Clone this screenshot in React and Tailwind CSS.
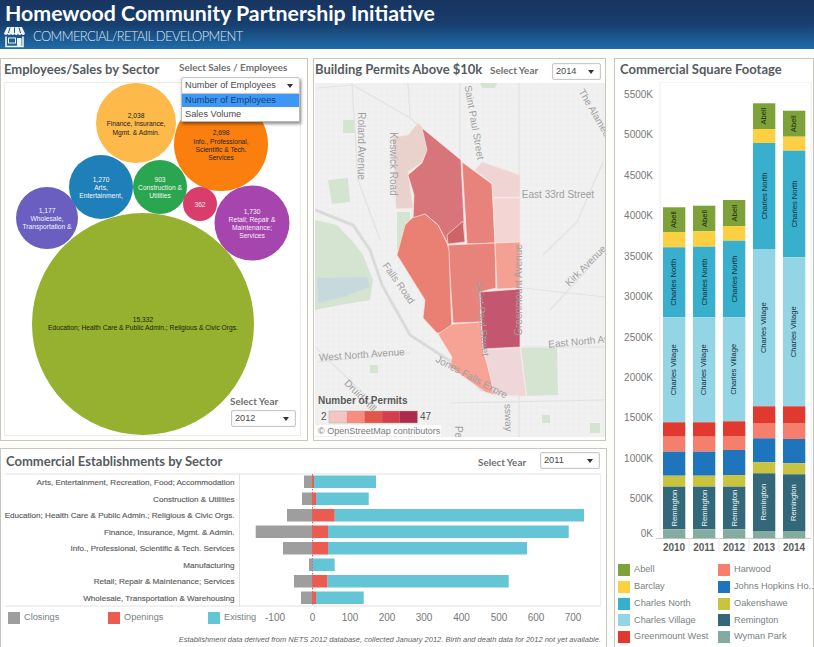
import React from "react";

const bubbles = [
  { cx: 136, cy: 123, r: 40, fill: "#fdb94a", color: "#222", lines: [["2,038", 115], ["Finance, Insurance,", 123], ["Mgmt. & Admin.", 132]] },
  { cx: 221, cy: 144, r: 47, fill: "#fb7f0f", color: "#222", lines: [["2,698", 132], ["Info., Professional,", 141], ["Scientific & Tech.", 149], ["Services", 157]] },
  { cx: 101, cy: 187, r: 32, fill: "#1f7fb8", color: "#f2f7fa", lines: [["1,270", 179], ["Arts,", 187], ["Entertainment,", 195]] },
  { cx: 160, cy: 187, r: 27, fill: "#2ba650", color: "#f2f7f2", lines: [["903", 179], ["Construction &", 187], ["Utilities", 195]] },
  { cx: 200, cy: 204, r: 17, fill: "#d83d6c", color: "#f7e6ec", lines: [["362", 204]] },
  { cx: 47, cy: 218, r: 31, fill: "#6a5fc0", color: "#f5f3fb", lines: [["1,177", 210], ["Wholesale,", 218], ["Transportation &", 226]] },
  { cx: 252, cy: 223, r: 37.5, fill: "#a745ae", color: "#f8eef8", lines: [["1,730", 211], ["Retail; Repair &", 219], ["Maintenance;", 227], ["Services", 235]] },
  { cx: 143, cy: 324, r: 111, fill: "#96b030", color: "#1c2208", lines: [["15,332", 319], ["Education; Health Care & Public Admin.; Religious & Civic Orgs.", 327]] },
];

const districts = [
  { fill: "#e9d2cc", points: "393,137 408,135 418,123 423,128 427,150 422,162 408,172 413,208 396,209" },
  { fill: "#d8757b", points: "422,128 461,160 465,242 448,244 438,225 425,214 413,220 414,195 408,175 422,163 427,150" },
  { fill: "#cc6468", points: "463,221 465,242 448,244 447,235" },
  { fill: "#e8837b", points: "462,162 492,184 495,243 467,244" },
  { fill: "#e8837b", points: "448,245 495,243 496,288 480,292 481,322 453,323" },
  { fill: "#ea7f74", points: "412,218 425,214 438,225 447,243 449,250 452,333 437,333 423,318 425,300 397,255 405,225" },
  { fill: "#f0d3d3", points: "475,170 482,162 520,175 520,197 493,197 492,183" },
  { fill: "#f3d5d4", points: "493,198 520,198 520,242 495,243" },
  { fill: "#f4a194", points: "495,243 520,242 520,288 497,289" },
  { fill: "#c5566f", points: "480,292 520,289 520,347 483,349" },
  { fill: "#f6a294", points: "453,324 481,322 483,349 487,363 492,383 492,394 485,392 450,367 452,357 438,334" },
  { fill: "#efd6d8", points: "483,350 520,348 526,396 493,395 492,383 487,363" },
];

const parks = [
  "521,348 557,348 558,395 527,396",
  "315,220 337,225 353,242 363,255 373,280 370,300 340,305 315,310",
  "343,120 355,120 355,133 343,133",
  "328,180 348,178 350,202 332,204",
  "397,212 410,212 410,250 397,250",
  "480,83 497,83 495,88 482,88",
  "370,365 378,365 378,373 370,373",
  "542,415 550,415 550,423 542,423",
  "590,423 600,423 600,433 590,433",
];

const mainRoads = [
  "317,88 353,85 410,118 420,127",
  "408,83 410,118",
  "519,83 519,437",
  "460,83 460,160",
  "603,162 577,222 543,255",
  "317,362 410,353",
  "523,288 605,297",
  "521,347 605,347",
  "450,403 605,400",
  "315,347 367,397",
  "605,250 550,310",
  "352,83 358,180 380,240",
];

const mapLabels = [
  { text: "Roland Avenue", x: 358, y: 146, a: 90 },
  { text: "Keswick Road", x: 390, y: 164, a: 90 },
  { text: "Saint Paul Street", x: 471, y: 123, a: 80 },
  { text: "The Alameda", x: 593, y: 117, a: 60 },
  { text: "East 33rd Street", x: 558, y: 198, a: 0 },
  { text: "Falls Road", x: 396, y: 285, a: 55 },
  { text: "West North Avenue", x: 362, y: 358, a: -4 },
  { text: "East North Avenue", x: 590, y: 344, a: -5 },
  { text: "Jones Falls Expre", x: 470, y: 380, a: 28 },
  { text: "ssway", x: 505, y: 418, a: 88 },
  { text: "Druid Hill", x: 358, y: 398, a: 45 },
  { text: "Greenmount Avenue", x: 522, y: 290, a: -90 },
  { text: "Saint Paul Street", x: 479, y: 319, a: 85 },
  { text: "Kirk Avenue", x: 588, y: 268, a: -45 },
  { text: "Pe", x: 455, y: 432, a: 90 },
];

const sectors = [
  { label: "Arts, Entertainment, Recreation, Food; Accommodation", y: 475.5, grey: 304, red: 314, teal: 376 },
  { label: "Construction & Utilities", y: 492.5, grey: 302, red: 316, teal: 368.7 },
  { label: "Education; Health Care & Public Admin.; Religious & Civic Orgs.", y: 509, grey: 287, red: 334.7, teal: 584 },
  { label: "Finance, Insurance, Mgmt. & Admin.", y: 525.5, grey: 255.7, red: 328, teal: 568.7 },
  { label: "Info., Professional, Scientific & Tech. Services", y: 542, grey: 283, red: 328, teal: 527 },
  { label: "Manufacturing", y: 558.5, grey: 309, red: 312, teal: 334.7 },
  { label: "Retail; Repair & Maintenance; Services", y: 575, grey: 294, red: 327.3, teal: 508.7 },
  { label: "Wholesale, Transportation & Warehousing", y: 591.5, grey: 301, red: 316, teal: 363.7 },
];

const axisD = [
  { t: "-100", x: 275 },
  { t: "0", x: 312.5 },
  { t: "100", x: 350 },
  { t: "200", x: 387 },
  { t: "300", x: 424 },
  { t: "400", x: 461.5 },
  { t: "500", x: 499 },
  { t: "600", x: 536 },
  { t: "700", x: 573 },
];

const neighborhoods = [
  { name: "Abell", color: "#7da23a" },
  { name: "Barclay", color: "#fdd043" },
  { name: "Charles North", color: "#37afcd" },
  { name: "Charles Village", color: "#93d5e4" },
  { name: "Greenmount West", color: "#e03a30" },
  { name: "Harwood", color: "#f67e6d" },
  { name: "Johns Hopkins Ho...", color: "#1f75bb" },
  { name: "Oakenshawe", color: "#c9c43f" },
  { name: "Remington", color: "#33687a" },
  { name: "Wyman Park", color: "#83ab9f" },
];

// y edges of each stack, top to bottom, same order as neighborhoods
const stacks = [
  { year: "2010", x: 663, edges: [207.3, 232, 247.3, 317.3, 422.3, 436.7, 451.7, 475.7, 486.7, 529.3, 538.3] },
  { year: "2011", x: 693, edges: [205.7, 231.3, 246.7, 317.3, 422.3, 436.7, 451.7, 475.7, 486.7, 529.3, 538.3] },
  { year: "2012", x: 723, edges: [200, 226, 240.7, 317.3, 421.3, 436, 450, 475, 486.7, 529.3, 538.3] },
  { year: "2013", x: 753, edges: [103.3, 129, 143, 249, 406.3, 423, 438.3, 462.3, 473.3, 531, 538.3] },
  { year: "2014", x: 783, edges: [110.7, 136.7, 150.7, 257.3, 406.3, 423, 439, 463.3, 474.3, 531, 538.3] },
];

const stackLabels = { 0: "#1d2a0a", 2: "#12303c", 3: "#14303a", 8: "#eef4f5" };

const axisC = [
  ["5500K", 94], ["5000K", 134], ["4500K", 175], ["4000K", 215], ["3500K", 256], ["3000K", 296],
  ["2500K", 337], ["2000K", 377], ["1500K", 417], ["1000K", 458], ["500K", 498], ["0K", 533],
];

function Dropdown({ value, className }) {
  return (
    <div className={"flex items-center justify-between bg-white border border-[#c9c9c9] rounded-[2px] shadow-[inset_0_0_2px_#ddd] pl-[3px] pr-[6px] h-[17px] text-[9.200px] text-[#4a4a4a] whitespace-nowrap font-['Liberation_Sans',sans-serif] " + className}>
      <span>{value}</span>
      <span className="w-0 h-0 border-x-[3px] border-x-transparent border-t-[4px] border-t-[#333]"></span>
    </div>
  );
}

function SmallLabel({ children, className = "" }) {
  return <div className={"text-[9.900px] font-bold text-[#6f6f6f] font-['Lato',sans-serif] whitespace-nowrap " + className}>{children}</div>;
}

function Title({ children, className = "" }) {
  return <div className={"text-[13px] font-bold text-[#555b5f] font-['Lato',sans-serif] whitespace-nowrap " + className}>{children}</div>;
}

function StoreIcon() {
  return (
    <svg width="23" height="22" viewBox="0 0 23 22" className="shrink-0">
      <path d="M4 1h15l3 6.5a2 2 0 0 1-3.6.6 2.2 2.2 0 0 1-3.5 0 2.2 2.2 0 0 1-3.4 0 2.2 2.2 0 0 1-3.5 0 2.2 2.2 0 0 1-3.5 0 2 2 0 0 1-3.5-.6z" fill="#eef3f7" />
      <path d="M7 1.500 5.500 7M11.500 1.500V7M16 1.500 17.500 7" stroke="#27558a" strokeWidth="1" />
      <path d="M3 10.500V20.500H20V10.500" fill="none" stroke="#eef3f7" strokeWidth="1.600" />
      <rect x="5.500" y="12" width="7" height="5" fill="none" stroke="#eef3f7" strokeWidth="1" />
      <rect x="14" y="12" width="4.500" height="8.500" fill="#eef3f7" />
    </svg>
  );
}

function BubbleChart() {
  return (
    <svg width="295" height="352" viewBox="5 83 295 352" className="block">
      {bubbles.map((b) => (
        <g key={b.cx}>
          <circle cx={b.cx} cy={b.cy} r={b.r} fill={b.fill} />
          {b.lines.map(([t, y]) => (
            <text key={t} x={b.cx} y={y + 2.500} textAnchor="middle" fontSize="6.700" fill={b.color} fontFamily="Liberation Sans, sans-serif">{t}</text>
          ))}
        </g>
      ))}
    </svg>
  );
}

function MapChart() {
  const hLines = [];
  const vLines = [];
  for (let y = 86; y < 437; y += 6) hLines.push(y);
  for (let x = 318; x < 605; x += 6) vLines.push(x);
  return (
    <svg width="290" height="354" viewBox="315 83 290 354" className="block">
      <rect x="315" y="83" width="290" height="354" fill="#efefef" />
      {hLines.map((y) => <line key={y} x1="315" x2="605" y1={y} y2={y} stroke="#f4f4f4" strokeWidth="0.600" />)}
      {vLines.map((x) => <line key={x} y1="83" y2="437" x1={x} x2={x} stroke="#f4f4f4" strokeWidth="0.600" />)}
      {parks.map((p) => <polygon key={p} points={p} fill="#d5e4d0" />)}
      <polygon points="317,278 367,277 370,287 343,297 318,303" fill="#c8d9dd" />
      {mainRoads.map((r) => <polyline key={r} points={r} fill="none" stroke="#e2e2e2" strokeWidth="1.200" />)}
      <polyline points="315,210 353,225 370,250 382,285 410,335 450,361 483,391" fill="none" stroke="#d9dbdb" strokeWidth="3" />
      {districts.map((d) => <polygon key={d.points} points={d.points} fill={d.fill} stroke="#f8e4e0" strokeWidth="0.700" />)}
      {mapLabels.map((l) => (
        <text key={l.text + l.x} x={l.x} y={l.y} textAnchor="middle" fontSize="10" fill="#a0a0a0" fontFamily="Liberation Sans, sans-serif" transform={`rotate(${l.a} ${l.x} ${l.y})`}>{l.text}</text>
      ))}
      <text x="318" y="404" fontSize="10" fontWeight="bold" fill="#5b5b5b" fontFamily="Liberation Sans, sans-serif">Number of Permits</text>
      <text x="321" y="420" fontSize="10" fill="#555" fontFamily="Liberation Sans, sans-serif">2</text>
      {["#f2c6c3", "#f88c80", "#e2554a", "#d23f4b", "#ac2a4e"].map((c, i) => (
        <rect key={c} x={329 + i * 17.700} y="411" width="17.700" height="12" fill={c} />
      ))}
      <rect x="329" y="411" width="88.500" height="12" fill="none" stroke="#aaa" strokeWidth="0.500" />
      <text x="420" y="420" fontSize="10" fill="#555" fontFamily="Liberation Sans, sans-serif">47</text>
      <rect x="315" y="425" width="126" height="11" fill="#fff" fillOpacity="0.850" />
      <text x="318" y="434" fontSize="9" fill="#7b7b7b" fontFamily="Liberation Sans, sans-serif">© OpenStreetMap contributors</text>
    </svg>
  );
}

function StackChart() {
  return (
    <svg width="198" height="478" viewBox="615 82 198 478" className="block">
      <rect x="660" y="82" width="151" height="456" fill="#fff" stroke="#eeeeee" />
      {axisC.map(([t, y]) => (
        <text key={t} x="653" y={y + 3.500} textAnchor="end" fontSize="10" fill="#777" fontFamily="Liberation Sans, sans-serif">{t}</text>
      ))}
      <line x1="656" x2="811" y1="538.500" y2="538.500" stroke="#cfcfcf" />
      {[689, 719, 749, 779].map((x) => <line key={x} x1={x} x2={x} y1="538" y2="552" stroke="#e8e8e8" />)}
      {stacks.map((s) => (
        <g key={s.year}>
          {neighborhoods.map((n, i) => {
            const top = s.edges[i];
            const h = s.edges[i + 1] - top;
            const label = { 0: "Abell", 2: "Charles North", 3: "Charles Village", 8: "Remington" }[i];
            const cx = s.x + 11.500;
            const cy = top + h / 2;
            return (
              <g key={n.name}>
                <rect x={s.x} y={top} width="22.300" height={h} fill={n.color} />
                {label && (
                  <text x={cx} y={cy} textAnchor="middle" dominantBaseline="middle" fontSize="7.600" fill={stackLabels[i]} fontFamily="Liberation Sans, sans-serif" transform={`rotate(-90 ${cx} ${cy})`}>{label}</text>
                )}
              </g>
            );
          })}
          <text x={s.x + 11} y="550.500" textAnchor="middle" fontSize="10" fontWeight="bold" fill="#5b5f60" fontFamily="Liberation Sans, sans-serif">{s.year}</text>
        </g>
      ))}
    </svg>
  );
}

function SectorChart() {
  return (
    <svg width="605" height="137" viewBox="1 473 605 137" className="block">
      <line x1="5" x2="601" y1="474" y2="474" stroke="#e2e2e2" />
      <line x1="5" x2="601" y1="606" y2="606" stroke="#e2e2e2" />
      <line x1="239.500" x2="239.500" y1="474" y2="606" stroke="#e2e2e2" />
      <line x1="600.500" x2="600.500" y1="474" y2="606" stroke="#eeeeee" />
      {sectors.map((s) => (
        <g key={s.label}>
          <text x="234.500" y={s.y + 9} textAnchor="end" fontSize="8.100" fill="#5c5c5c" stroke="#5c5c5c" strokeWidth="0.150" fontFamily="Liberation Sans, sans-serif">{s.label}</text>
          <rect x={s.grey} y={s.y} width={313 - s.grey} height="12.500" fill="#9e9e9e" />
          <rect x={s.red} y={s.y} width={s.teal - s.red} height="12.500" fill="#63c5d6" />
          <rect x="312" y={s.y} width={s.red - 312} height="12.500" fill="#ec5b52" />
        </g>
      ))}
      <line x1="312.500" x2="312.500" y1="474" y2="606" stroke="#e4645c" strokeDasharray="1.500 1.500" />
    </svg>
  );
}

export default function App() {
  const legendD = [
    { name: "Closings", color: "bg-[#9e9e9e]", width: "w-[100px]" },
    { name: "Openings", color: "bg-[#ec5b52]", width: "w-[100px]" },
    { name: "Existing", color: "bg-[#63c5d6]", width: "w-[52px]" },
  ];

  return (
    <div className="w-[814px] h-[647px] overflow-hidden bg-[#fdfdfa] font-['Liberation_Sans',sans-serif]">
      <header className="h-[49px] pl-[5px] bg-gradient-to-b from-[#18345f] via-[#173f70] to-[#1e6ca9] text-white">
        <div className="text-[21.300px] leading-[26px] font-bold font-['Lato',sans-serif] whitespace-nowrap">Homewood Community Partnership Initiative</div>
        <div className="flex items-center -ml-[2px] h-[22px]">
          <StoreIcon />
          <div className="ml-[7px] text-[13px] font-light tracking-[-0.650px] text-[#dbe6f0] font-['Lato',sans-serif] whitespace-nowrap">COMMERCIAL/RETAIL DEVELOPMENT</div>
        </div>
      </header>

      <div className="flex pt-[9px]">
        <div className="w-[607px] shrink-0">
          <div className="flex h-[383px]">
            {/* bubbles */}
            <section className="relative w-[308px] border border-[#cdc4bb] bg-white">
              <div className="h-[23px] pl-[3px] pt-[1px]">
                <Title>Employees/Sales by Sector</Title>
              </div>
              <div className="ml-[3px] w-[297px] h-[354px] border border-[#ecebe6]">
                <BubbleChart />
              </div>
              <SmallLabel className="absolute left-[178px] top-[1px]">Select Sales / Employees</SmallLabel>
              <div className="absolute left-[180px] top-[18px] w-[119px] shadow-[1px_2px_3px_rgba(0,0,0,0.45)]">
                <Dropdown value="Number of Employees" className="rounded-b-none" />
                <div className="bg-white border border-t-0 border-[#b9b9b9] text-[9.200px] text-[#4a4a4a]">
                  <div className="h-[13px] leading-[13px] pl-[3px] bg-[#3f97f5] text-[#173f78]">Number of Employees</div>
                  <div className="h-[14px] leading-[14px] pl-[3px]">Sales Volume</div>
                </div>
              </div>
              <SmallLabel className="absolute left-[229px] top-[335px]">Select Year</SmallLabel>
              <Dropdown value="2012" className="absolute left-[230px] top-[351px] w-[65px]" />
            </section>

            {/* permits map */}
            <section className="ml-[5px] w-[293px] border border-[#c9c5bf] bg-white">
              <div className="relative h-[24px] pl-[1px] pt-[1px]">
                <Title>Building Permits Above $10k</Title>
                <SmallLabel className="absolute left-[176px] top-[4px]">Select Year</SmallLabel>
                <Dropdown value="2014" className="absolute left-[238px] top-[4px] w-[49px]" />
              </div>
              <div className="ml-[1px]">
                <MapChart />
              </div>
            </section>
          </div>

          {/* establishments */}
          <section className="relative mt-[7px] h-[210px] border border-[#c9c5bf] bg-white">
            <div className="h-[24px] pl-[5px] pt-[3px]">
              <Title>Commercial Establishments by Sector</Title>
            </div>
            <SectorChart />
            <div className="flex items-start h-[25px]">
              <div className="flex pl-[7px] pt-[1px] w-[259px]">
                {legendD.map((l) => (
                  <div key={l.name} className={"flex items-center shrink-0 gap-[4px] whitespace-nowrap text-[9.200px] text-[#77817f] " + l.width}>
                    <span className={"w-[12px] h-[12px] shrink-0 " + l.color}></span>
                    {l.name}
                  </div>
                ))}
              </div>
              <svg width="340" height="16" viewBox="260 610 340 16" className="block">
                {axisD.map((a) => (
                  <text key={a.t} x={a.x} y="621" textAnchor="middle" fontSize="10" fill="#777" fontFamily="Liberation Sans, sans-serif">{a.t}</text>
                ))}
              </svg>
            </div>
            <div className="text-right pr-[5px] text-[7.500px] leading-[10px] italic text-[#5f5f5f] whitespace-nowrap">Establishment data derived from NETS 2012 database, collected January 2012. Birth and death data for 2012 not yet available.</div>
            <SmallLabel className="absolute left-[477px] top-[6px]">Select Year</SmallLabel>
            <Dropdown value="2011" className="absolute left-[539px] top-[3px] w-[60px]" />
          </section>
        </div>

        {/* square footage */}
        <section className="ml-[7px] w-[200px] h-[600px] border border-[#c9c5bf] bg-white">
          <div className="h-[23px] pl-[5px] pt-[1px]">
            <Title>Commercial Square Footage</Title>
          </div>
          <StackChart />
          <div className="grid grid-cols-[100px_98px] grid-rows-5 grid-flow-col pl-[3px] mt-[2px] overflow-hidden">
            {neighborhoods.map((n) => (
              <div key={n.name} className="flex items-center gap-[4px] h-[16.700px] text-[9.200px] text-[#77817f] whitespace-nowrap">
                <span className="w-[12px] h-[12px] shrink-0" style={{ backgroundColor: n.color }}></span>
                {n.name}
              </div>
            ))}
          </div>
        </section>
      </div>
    </div>
  );
}
